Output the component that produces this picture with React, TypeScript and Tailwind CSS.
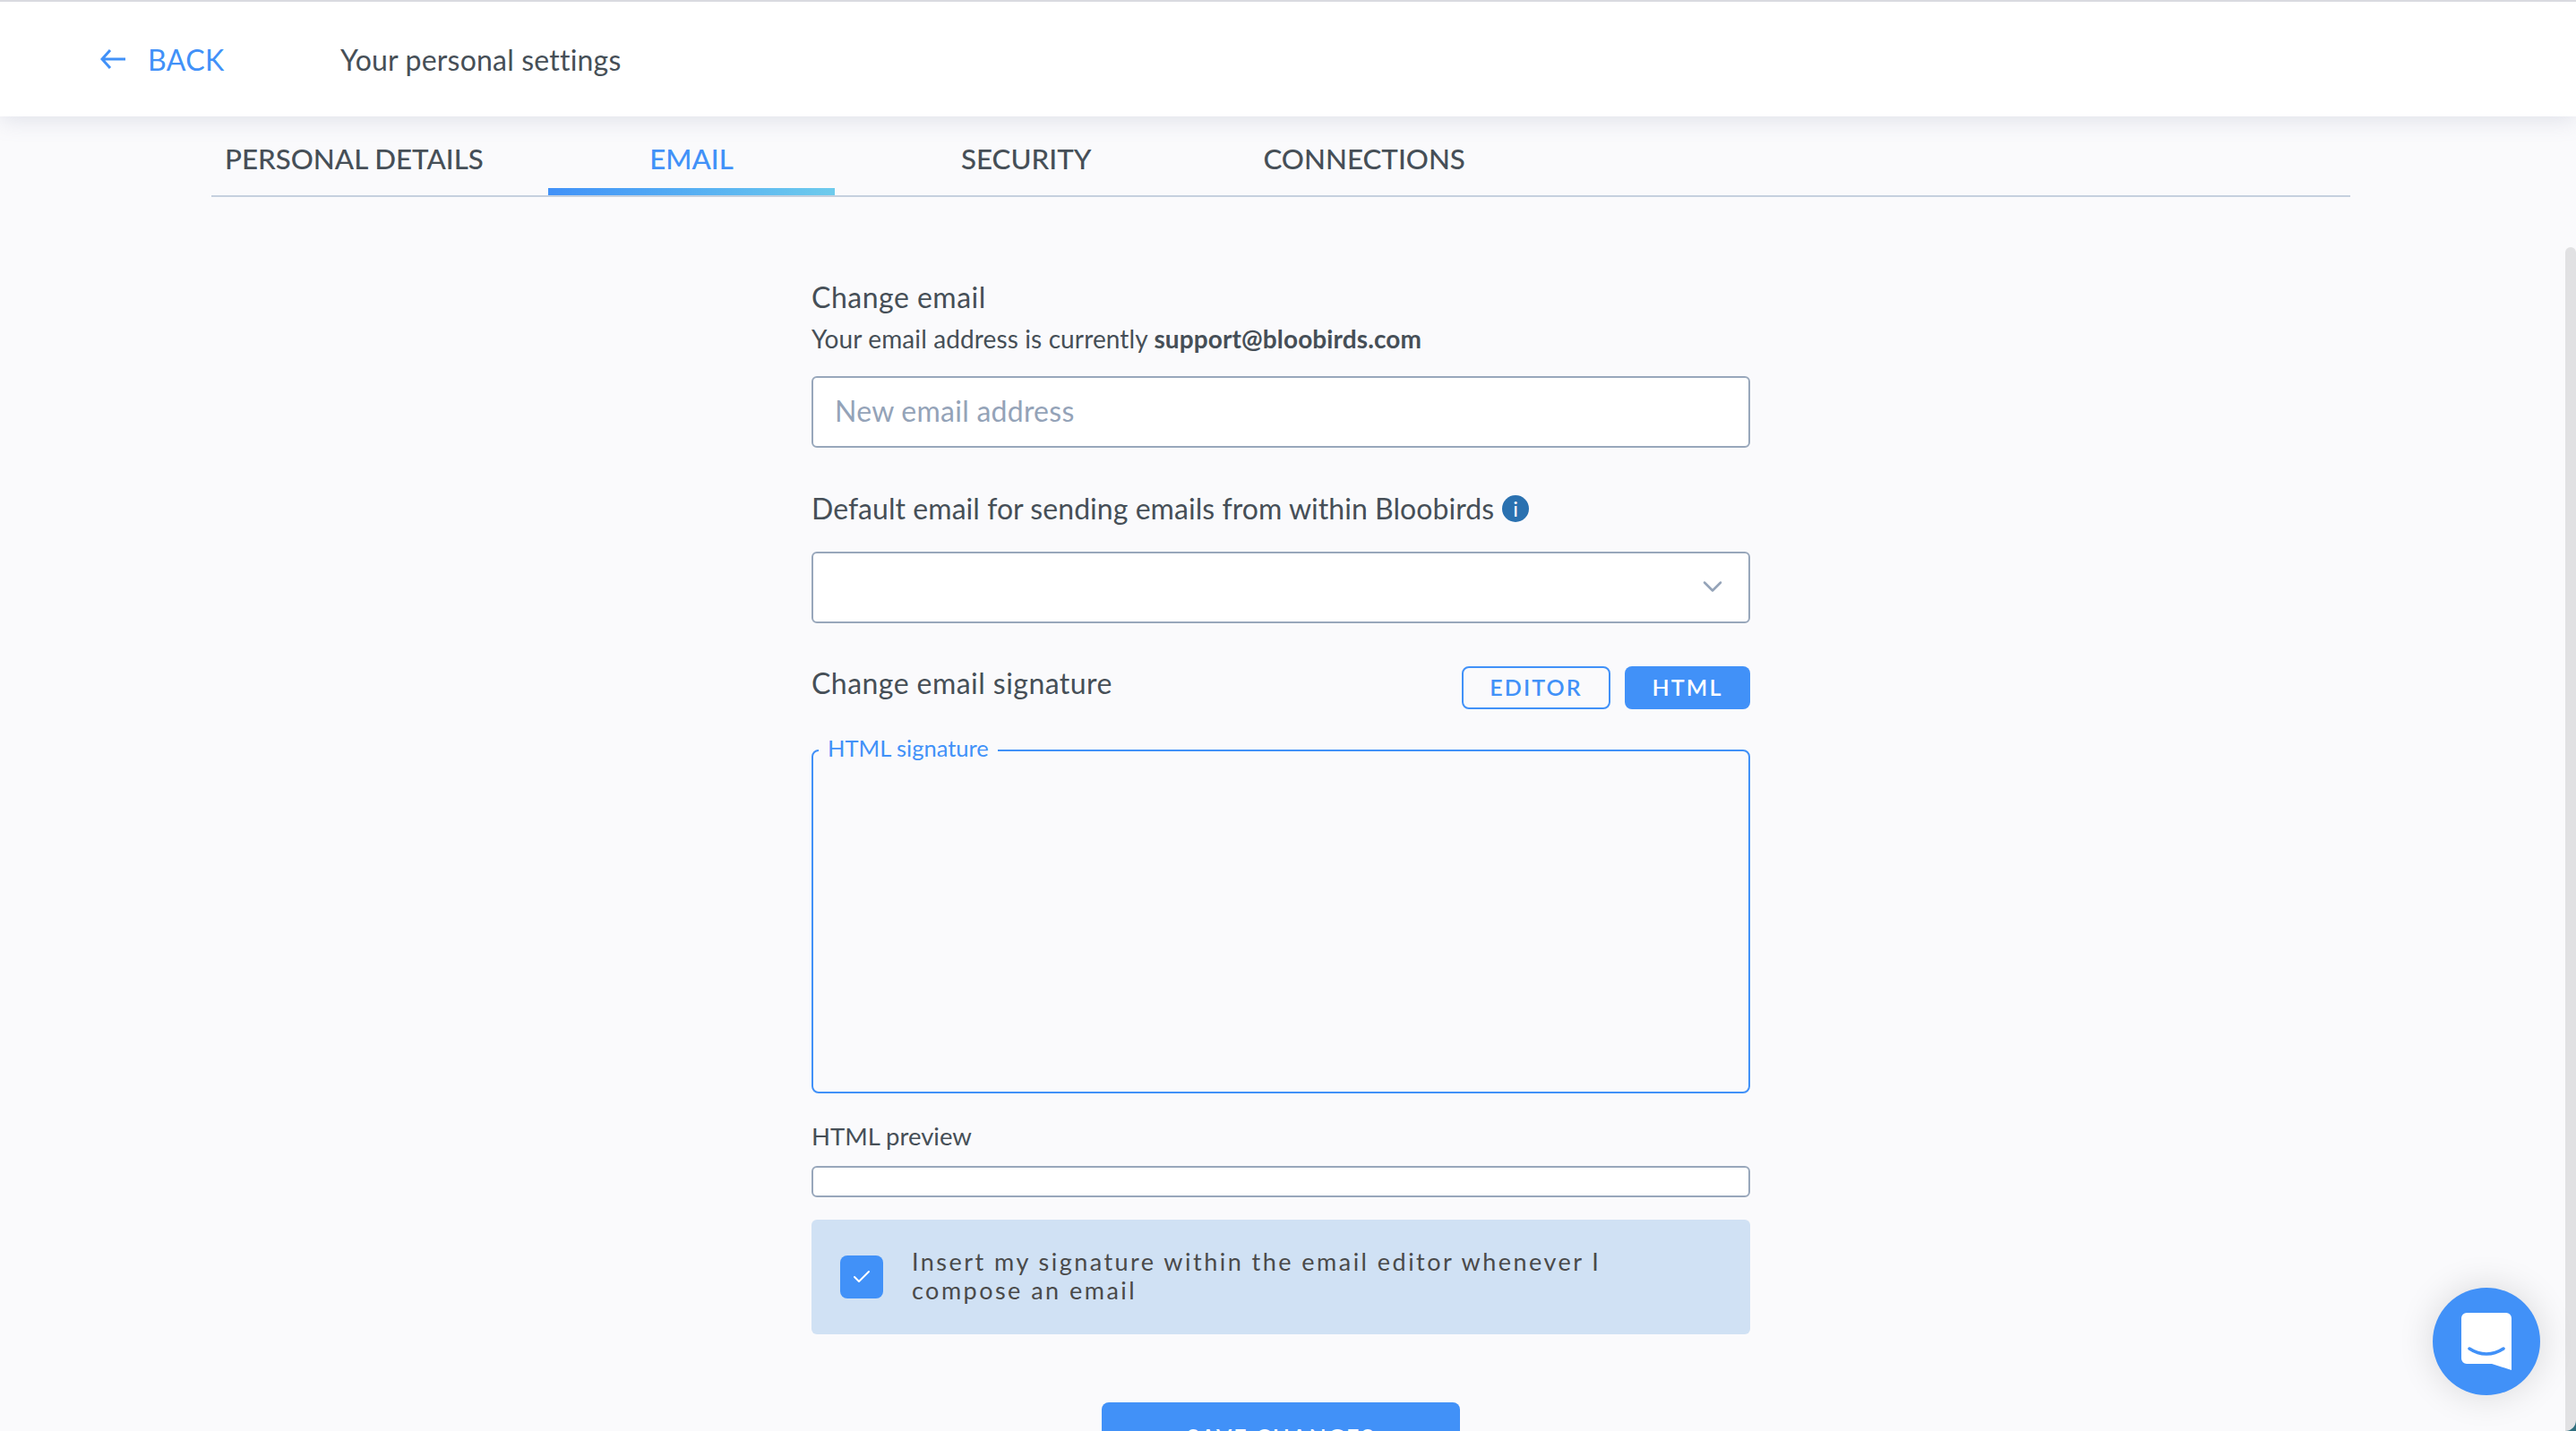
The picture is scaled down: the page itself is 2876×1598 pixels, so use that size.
import React from 'react';
import { ChevronDown, Check } from 'lucide-react';

const font = { fontFamily: 'Lato, "Open Sans", sans-serif' };

const tabs = [
  { label: 'PERSONAL DETAILS', cls: 'w-[376px] pl-[15px] text-[#464f57]' },
  { label: 'EMAIL', cls: 'w-[320px] text-center text-[#4191f8]' },
  { label: 'SECURITY', cls: 'ml-[141px] text-[#464f57]' },
  { label: 'CONNECTIONS', cls: 'ml-[192px] text-[#464f57]' },
];

export default function App() {
  return (
    <div className="relative h-screen w-full overflow-hidden bg-[#fafafc] text-[#464f57]" style={font}>
      <header className="relative z-10 flex h-[130px] items-center border-t-2 border-[#d9dae0] bg-white pl-[112px] shadow-[0_4px_24px_rgba(120,130,160,0.2)]">
        <svg width="28" height="22" viewBox="0 0 28 22" fill="none" stroke="#4191f8" strokeWidth="3">
          <path d="M28 11H2M11 1L2 11l9 10" />
        </svg>
        <span className="mt-[2px] ml-[25px] w-[215px] text-[32px] tracking-[0.4px] text-[#4191f8]">BACK</span>
        <span className="mt-[2px] text-[32px] tracking-[0.2px]">Your personal settings</span>
      </header>

      <nav className="ml-[236px] flex h-[90px] w-[2388px] items-start border-b-2 border-[#c5d0de]">
        {tabs.map(tab => (
          <div key={tab.label} className={`relative h-[88px] pt-[26px] text-[31.3px] leading-[42px] font-medium ${tab.cls}`}>
            {tab.label}
            {tab.label === 'EMAIL' && (
              <div className="absolute right-0 bottom-0 left-0 h-2 bg-gradient-to-r from-[#4191f8] to-[#6ecbec]" />
            )}
          </div>
        ))}
      </nav>

      <main className="ml-[906px] w-[1048px] pt-[90px]">
        <h2 className="text-[32px] leading-[44px] tracking-[0.5px]">Change email</h2>
        <p className="mt-[4px] text-[28px] leading-[40px] tracking-[0.12px]">
          Your email address is currently <b className="font-bold">support@bloobirds.com</b>
        </p>
        <div className="mt-[22px] flex h-[80px] items-center rounded-[6px] border-2 border-[#98a7bb] bg-white pl-[24px] text-[32px] tracking-[0.25px] text-[#94a3b8]">
          <span className="-mt-[3px]">New email address</span>
        </div>

        <div className="mt-[46px] flex h-[44px] items-center gap-[9px]">
          <span className="text-[32px] tracking-[0.05px]">Default email for sending emails from within Bloobirds</span>
          <span className="flex h-[30px] w-[30px] items-center justify-center rounded-full bg-[#2a71b0] text-[24px] leading-none text-white">i</span>
        </div>
        <div className="mt-[26px] flex h-[80px] items-center justify-end rounded-[6px] border-2 border-[#98a7bb] bg-white pr-[22px]">
          <ChevronDown className="-mt-[2px] h-[36px] w-[36px] text-[#94a3b8]" strokeWidth={1.7} />
        </div>

        <div className="mt-[48px] flex h-[48px] items-start justify-between">
          <span className="-mt-[3px] text-[32px] leading-[44px] tracking-[0.45px]">Change email signature</span>
          <div className="flex gap-4">
            <div className="flex h-[48px] w-[166px] items-center justify-center rounded-[8px] border-2 border-[#4191f8] text-[25px] font-semibold tracking-[2.1px] text-[#4191f8]">EDITOR</div>
            <div className="flex h-[48px] w-[140px] items-center justify-center rounded-[8px] bg-[#4191f8] text-[25px] font-semibold tracking-[2.1px] text-white">HTML</div>
          </div>
        </div>

        <div className="relative mt-[45px] h-[384px] rounded-[8px] border-2 border-[#4191f8]">
          <span className="absolute -top-[19px] left-[6px] bg-[#fafafc] px-[10px] text-[25.5px] leading-[30px] text-[#4191f8]">HTML signature</span>
        </div>

        <div className="mt-[30px] text-[27.5px] leading-[36px]">HTML preview</div>
        <div className="mt-[15px] h-[35px] rounded-[6px] border-2 border-[#98a7bb] bg-white" />

        <div className="mt-[25px] flex h-[128px] items-center rounded-[6px] bg-[#d0e1f4] pl-[32px]">
          <div className="flex h-[48px] w-[48px] shrink-0 items-center justify-center rounded-[8px] bg-[#4191f8]">
            <Check className="h-[24px] w-[24px] text-white" strokeWidth={2} />
          </div>
          <p className="-mt-[2px] ml-[32px] w-[860px] text-[27px] leading-[32px] tracking-[2.47px] text-[#4a4a4a]">
            Insert my signature within the email editor whenever I compose an email
          </p>
        </div>

        <div className="mx-auto mt-[76px] h-[80px] w-[400px] rounded-[8px] bg-[#4191f8] pt-[20px] text-center text-[25px] font-semibold tracking-[2.1px] text-white">
          SAVE CHANGES
        </div>
      </main>

      <div className="absolute right-0 bottom-0 h-[12px] w-[12px] bg-[#2f6f7e]" />
      <div className="absolute top-[276px] right-0 bottom-0 w-[12px] rounded-t-[6px] rounded-br-[12px] bg-[#e1e1e3]" />

      <div className="absolute top-[1438px] left-[2716px] h-[120px] w-[120px] rounded-full bg-[#4191f8] shadow-[0_0_40px_rgba(0,0,0,0.14)]">
        <svg width="120" height="120" viewBox="0 0 120 120">
          <path d="M38 28h44a6 6 0 0 1 6 6v58l-22-7H38a6 6 0 0 1-6-6V34a6 6 0 0 1 6-6z" fill="#fff" />
          <path d="M41 68c12 8 26 8 38 0" fill="none" stroke="#4191f8" strokeWidth="3.5" strokeLinecap="round" />
        </svg>
      </div>
    </div>
  );
}
